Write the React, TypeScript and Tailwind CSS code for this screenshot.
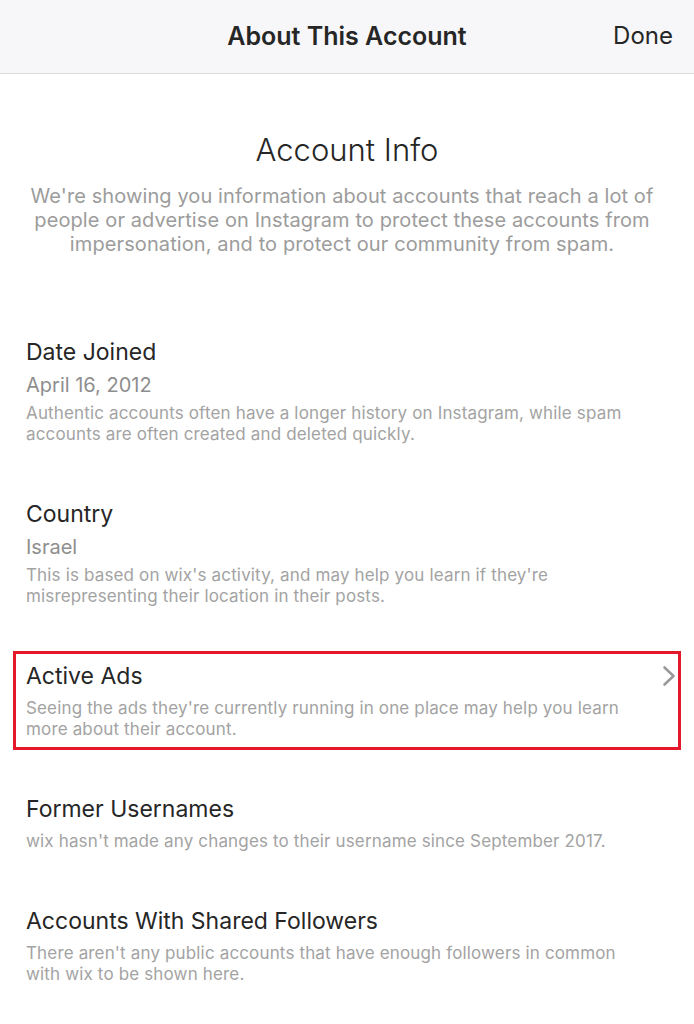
import { ReactNode } from "react";

type Section = {
  title: string;
  value?: string;
  lines: string[];
  highlight?: boolean;
  chevron?: boolean;
};

const sections: Section[] = [
  {
    title: "Date Joined",
    value: "April 16, 2012",
    lines: [
      "Authentic accounts often have a longer history on Instagram, while spam",
      "accounts are often created and deleted quickly.",
    ],
  },
  {
    title: "Country",
    value: "Israel",
    lines: [
      "This is based on wix's activity, and may help you learn if they're",
      "misrepresenting their location in their posts.",
    ],
  },
  {
    title: "Active Ads",
    lines: [
      "Seeing the ads they're currently running in one place may help you learn",
      "more about their account.",
    ],
    highlight: true,
    chevron: true,
  },
  {
    title: "Former Usernames",
    lines: ["wix hasn't made any changes to their username since September 2017."],
  },
  {
    title: "Accounts With Shared Followers",
    lines: [
      "There aren't any public accounts that have enough followers in common",
      "with wix to be shown here.",
    ],
  },
];

const Chevron = () => (
  <svg
    viewBox="0 0 14 22"
    className="absolute right-[18px] top-[14px] h-[22px] w-[14px]"
    fill="none"
    stroke="#9a9a9a"
    strokeWidth="2.6"
    strokeLinecap="round"
    strokeLinejoin="round"
  >
    <path d="M2.5 2.5 L11.5 11 L2.5 19.5" />
  </svg>
);

const Row = ({ section }: { section: Section }): ReactNode => (
  <div className="relative px-[26px] pt-[10px] pb-[10px]">
    {section.highlight && (
      <div className="absolute left-[13px] right-[13px] top-0 bottom-0 border-[3px] border-[#e3192b]" />
    )}
    {section.chevron && <Chevron />}
    <p className="text-[23px] leading-[30px] text-[#262626]">{section.title}</p>
    {section.value && (
      <p className="mt-[3px] text-[20px] leading-[30px] text-[#8e8e8e]">
        {section.value}
      </p>
    )}
    <div
      className={`text-[17px] leading-[21px] tracking-[0.15px] text-[#a3a3a3] ${
        section.value ? "mt-[3px]" : "mt-[7px]"
      }`}
    >
      {section.lines.map((line) => (
        <p key={line} className="whitespace-nowrap">
          {line}
        </p>
      ))}
    </div>
  </div>
);

const App = () => {
  return (
    <div className="min-h-[1024px] w-[694px] bg-white font-['Inter','Liberation_Sans',sans-serif]">
      <div className="relative flex h-[74px] items-center justify-center border-b border-[#dcdcdc] bg-[#f7f7f9]">
        <p className="text-[25px] font-semibold text-[#262626]">About This Account</p>
        <button className="absolute right-[21px] top-[20px] text-[24px] leading-[32px] text-[#262626]">
          Done
        </button>
      </div>
      <div className="flex flex-col items-center pt-[56px]">
        <p className="text-[31px] font-light leading-[40px] text-[#262626]">Account Info</p>
        <div className="mt-[14px] pr-[10px] text-center text-[20px] leading-[24px] tracking-[0.1px] text-[#9c9c9c]">
          <p className="whitespace-nowrap">
            We're showing you information about accounts that reach a lot of
          </p>
          <p className="whitespace-nowrap">
            people or advertise on Instagram to protect these accounts from
          </p>
          <p className="whitespace-nowrap">
            impersonation, and to protect our community from spam.
          </p>
        </div>
      </div>
      <div className="mt-[71px] flex flex-col gap-[34px]">
        {sections.map((s) => (
          <Row key={s.title} section={s} />
        ))}
      </div>
    </div>
  );
};

export default App;
